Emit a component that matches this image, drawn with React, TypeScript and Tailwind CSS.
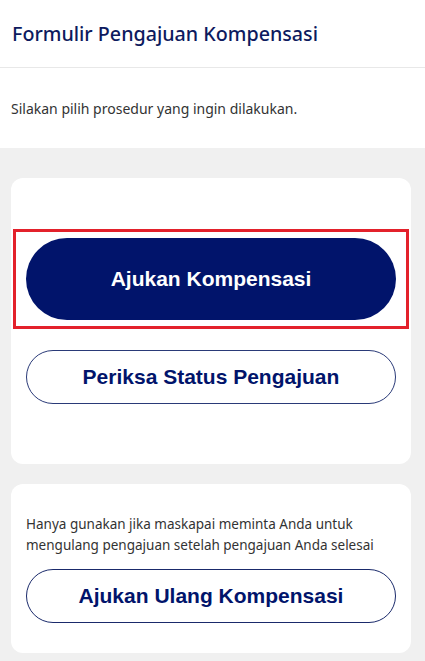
import * as React from 'react';

const bodyFont = { fontFamily: '"Noto Sans", "Open Sans", sans-serif' };

export default function App() {
	return (
		<div className="min-h-[661px] bg-[#f0f0f0]" style={bodyFont}>
			{/* Header */}
			<div className="flex h-[68px] items-center border-b border-[#e8e8e8] bg-white px-3">
				<h1 className="text-[19.7px] font-medium text-[#0d1a5e]">
					Formulir Pengajuan Kompensasi
				</h1>
			</div>
			<div className="flex h-[80px] items-center bg-white px-[11px]">
				<p className="text-[14px] text-[#333333]">
					Silakan pilih prosedur yang ingin dilakukan.
				</p>
			</div>

			<div className="flex flex-col gap-5 pt-[30px] pr-[14px] pl-[11px]">
				{/* Main card */}
				<div className="flex flex-col gap-[30px] rounded-xl bg-white px-[15px] py-[60px]">
					<div className="relative">
						{/* Highlight frame */}
						<div className="pointer-events-none absolute -inset-x-[13px] -inset-y-[9px] border-[3px] border-[#e3212b]" />
						<button className="flex h-[82px] w-full items-center justify-center rounded-full bg-[#01146b] font-[family-name:Liberation_Sans,Arial,sans-serif] text-[21px] font-bold text-white">
							Ajukan Kompensasi
						</button>
					</div>
					<button className="flex h-[54px] w-full items-center justify-center rounded-full border border-[#2a3a78] bg-white font-[family-name:Liberation_Sans,Arial,sans-serif] text-[21px] font-bold text-[#01146b]">
						Periksa Status Pengajuan
					</button>
				</div>

				{/* Resubmit card */}
				<div className="flex flex-col gap-[13px] rounded-xl bg-white px-[15px] pt-[30px] pb-[30px]">
					<p className="text-[13.5px] leading-[21px] text-[#333333]">
						Hanya gunakan jika maskapai meminta Anda untuk mengulang pengajuan setelah pengajuan Anda selesai
					</p>
					<button className="flex h-[54px] w-full items-center justify-center rounded-full border border-[#1a2a6b] bg-white font-[family-name:Liberation_Sans,Arial,sans-serif] text-[21px] font-bold text-[#01146b]">
						Ajukan Ulang Kompensasi
					</button>
				</div>
			</div>
		</div>
	);
}
